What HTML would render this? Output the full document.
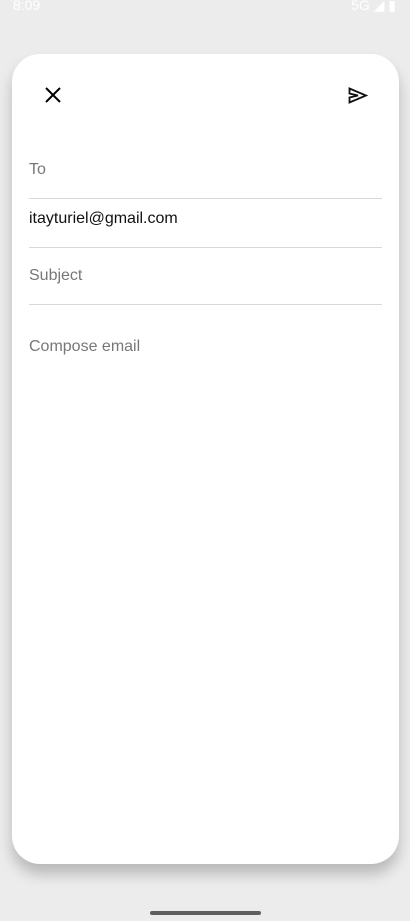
<!DOCTYPE html>
<html><head><meta charset="utf-8"><style>
body{margin:0;width:410px;height:921px;background:#ececec;position:relative;overflow:hidden;font-family:"Liberation Sans",Roboto,sans-serif}
.sb{position:absolute;top:-3px;left:13px;color:#fff;font-size:14px}
.sbr{position:absolute;top:-3px;right:14px;color:#fff;font-size:14px}
.card{position:absolute;left:12px;top:54px;width:387px;height:810px;background:#fff;border-radius:28px;box-shadow:0 10px 14px rgba(0,0,0,.22)}
.t{position:absolute;left:29px;font-size:16px;color:#777}
.l{position:absolute;left:29px;width:353px;height:1px;background:#d8d8d8}
.bar{position:absolute;left:150px;top:911px;width:111px;height:4px;border-radius:2px;background:#5f5f5f}
</style></head><body>
<div class="sb">8:09</div><div class="sbr">5G ◢ ▮</div>
<div class="card"></div>
<svg style="position:absolute;left:44px;top:86px" width="18" height="18"><path d="M2 2L16 16M16 2L2 16" stroke="#000" stroke-width="2"/></svg>
<svg style="position:absolute;left:348px;top:87px" width="20" height="17"><path d="M1.5 1.5L18 8.5L1.5 15.5V10.5L10 8.5L1.5 6.5Z" fill="none" stroke="#111" stroke-width="1.8" stroke-linejoin="miter"/></svg>
<div class="t" style="top:161px">To</div>
<div class="l" style="top:198px"></div>
<div class="t" style="top:210px;color:#111">itayturiel@gmail.com</div>
<div class="l" style="top:247px"></div>
<div class="t" style="top:267px">Subject</div>
<div class="l" style="top:304px"></div>
<div class="t" style="top:338px">Compose email</div>
<div class="bar"></div>
</body></html>
